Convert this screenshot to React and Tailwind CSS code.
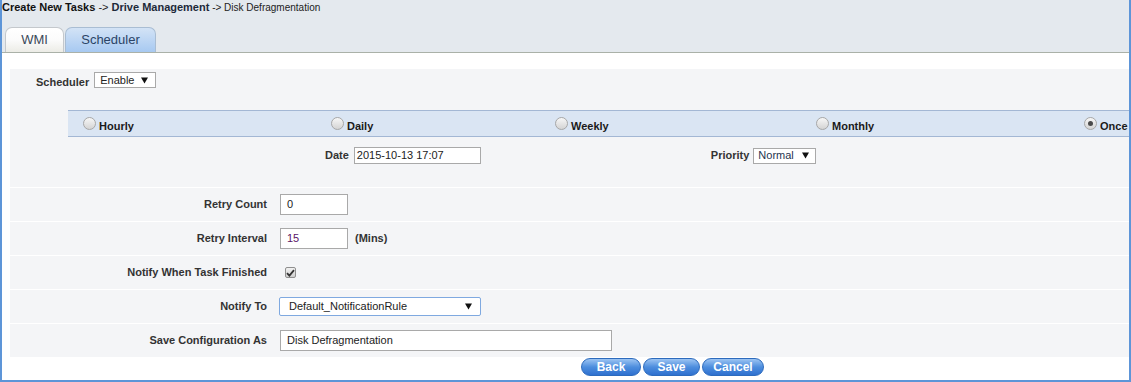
import React from 'react';

const Caret = () => (
    <svg width="7" height="7" viewBox="0 0 7 7" className="shrink-0">
        <path d="M0 0.5 H7 L3.5 6.5 Z" fill="#111" />
    </svg>
);

const FakeSelect = ({ value, className, textClass = '' }) => (
    <div className={`flex items-center justify-between bg-white border ${className}`}>
        <span className={`text-[11px] leading-none ${textClass}`}>{value}</span>
        <Caret />
    </div>
);

const Radio = ({ checked }) => (
    <span className="relative inline-flex items-center justify-center w-[13px] h-[13px] rounded-full border border-[#a7a7a7] bg-gradient-to-b from-[#f7f7f7] to-[#d4d4d4] shrink-0">
        {checked && <span className="w-[5px] h-[5px] rounded-full bg-[#4a4a4a]" />}
    </span>
);

const Row = ({ label, children }) => (
    <div className="h-[33px] bg-[#f4f5f7] flex items-center">
        <div className="w-[257px] text-right font-bold text-[#333]">{label}</div>
        <div className="ml-[13px] flex items-center">{children}</div>
    </div>
);

const frequencies = [
    { name: 'Hourly', cell: 'w-[263px] pl-[15px]' },
    { name: 'Daily', cell: 'w-[224px]' },
    { name: 'Weekly', cell: 'w-[261px]' },
    { name: 'Monthly', cell: 'w-[268px]' },
    { name: 'Once', cell: 'flex-1', checked: true },
];

const App = () => {
    return (
        <div className="w-[1131px] h-[382px] flex flex-col border-l-2 border-r-2 border-b-2 border-[#5d95d8] bg-white font-['Liberation_Sans',Arial,sans-serif] text-[11px] text-[#222]">
            {/* Header with breadcrumb and tabs */}
            <div className="h-[53px] bg-[#e4e9ee] border-b border-[#aab1a8] flex flex-col">
                <div className="h-[14px] leading-[14px] whitespace-nowrap">
                    <span className="font-bold text-[#111]">Create New Tasks</span>
                    <span> -&gt; </span>
                    <span className="font-bold text-[#1d2a3a]">Drive Management</span>
                    <span className="text-[10px]"> -&gt; Disk Defragmentation</span>
                </div>
                <div className="mt-auto flex items-end pl-[3px] gap-px">
                    <div className="w-[59px] h-[25px] rounded-t-[7px] border border-b-0 border-[#c4c8cc] bg-gradient-to-b from-white via-[#fbfbfb] to-[#ecece6] flex justify-center pt-[5px] text-[13px] leading-none text-[#3a4858]">
                        WMI
                    </div>
                    <div className="w-[91px] h-[25px] rounded-t-[7px] border border-b-0 border-[#a9bdd3] bg-gradient-to-b from-[#d3e3f6] to-[#a7c9f1] flex justify-center pt-[5px] text-[13px] leading-none text-[#2b4466]">
                        Scheduler
                    </div>
                </div>
            </div>

            {/* Form panel */}
            <div className="mt-[16px] ml-[8px] flex flex-col gap-px">
                <div className="h-[118px] bg-[#f4f5f7] flex flex-col">
                    <div className="h-[41px] flex items-start pt-[3px] pl-[26px]">
                        <span className="font-bold text-[#333] mt-[2px]">Scheduler</span>
                        <FakeSelect value="Enable" className="ml-[5px] w-[62px] h-[16px] border-[#a9a9a9] pl-[5px] pr-[7px]" />
                    </div>

                    <div className="ml-[58px] h-[27px] bg-[#dae5f3] border-y border-[#a3b7d4] flex items-center">
                        {frequencies.map((f) => (
                            <div key={f.name} className={`${f.cell} flex items-center gap-[3px]`}>
                                <Radio checked={f.checked} />
                                <span className="font-bold text-[#1a1a1a] pt-[5px]">{f.name}</span>
                            </div>
                        ))}
                    </div>

                    <div className="flex items-center pt-[10px] pl-[315px]">
                        <span className="font-bold text-[#333]">Date</span>
                        <div className="ml-[5px] w-[127px] h-[17px] bg-white border border-[#a9a9a9] flex items-center pl-[2px] leading-none">
                            2015-10-13 17:07
                        </div>
                        <span className="ml-[230px] font-bold text-[#333]">Priority</span>
                        <FakeSelect value="Normal" className="ml-[4px] w-[63px] h-[16px] border-[#a9a9a9] pl-[4px] pr-[6px]" textClass="text-[#1f3550]" />
                    </div>
                </div>

                <Row label="Retry Count">
                    <div className="w-[68px] h-[21px] bg-white border border-[#a9a9a9] flex items-center pl-[6px] leading-none">0</div>
                </Row>
                <Row label="Retry Interval">
                    <div className="w-[68px] h-[21px] bg-white border border-[#a9a9a9] flex items-center pl-[6px] leading-none text-[#5b1466]">15</div>
                    <span className="ml-[7px] font-bold text-[#333]">(Mins)</span>
                </Row>
                <Row label="Notify When Task Finished">
                    <span className="ml-[5px] w-[11px] h-[11px] border border-[#8f8f8f] rounded-[2px] bg-gradient-to-b from-[#f2f2f2] to-[#cfcfcf] flex items-center justify-center">
                        <svg width="9" height="8" viewBox="0 0 9 8">
                            <path d="M1 4.2 L3.4 6.6 L8 1.2" fill="none" stroke="#333" strokeWidth="1.8" />
                        </svg>
                    </span>
                </Row>
                <Row label="Notify To">
                    <FakeSelect value="Default_NotificationRule" className="-ml-px w-[202px] h-[19px] border-[#7fa9e0] rounded-[2px] pl-[9px] pr-[8px]" />
                </Row>
                <Row label="Save Configuration As">
                    <div className="w-[332px] h-[21px] bg-white border border-[#a9a9a9] flex items-center pl-[6px] leading-none">
                        Disk Defragmentation
                    </div>
                </Row>
            </div>

            {/* Actions */}
            <div className="mt-px ml-[579px] flex gap-[2px]">
                {['Back', 'Save', 'Cancel'].map((b, i) => (
                    <button
                        key={b}
                        className={`${['w-[60px]', 'w-[57px]', 'w-[62px]'][i]} h-[18px] rounded-full border border-[#2d6bbd] bg-gradient-to-b from-[#9cc4f2] via-[#4d8ede] to-[#2f70cf] text-white font-bold text-[12px] leading-none`}
                    >
                        {b}
                    </button>
                ))}
            </div>
        </div>
    );
};

export default App;
